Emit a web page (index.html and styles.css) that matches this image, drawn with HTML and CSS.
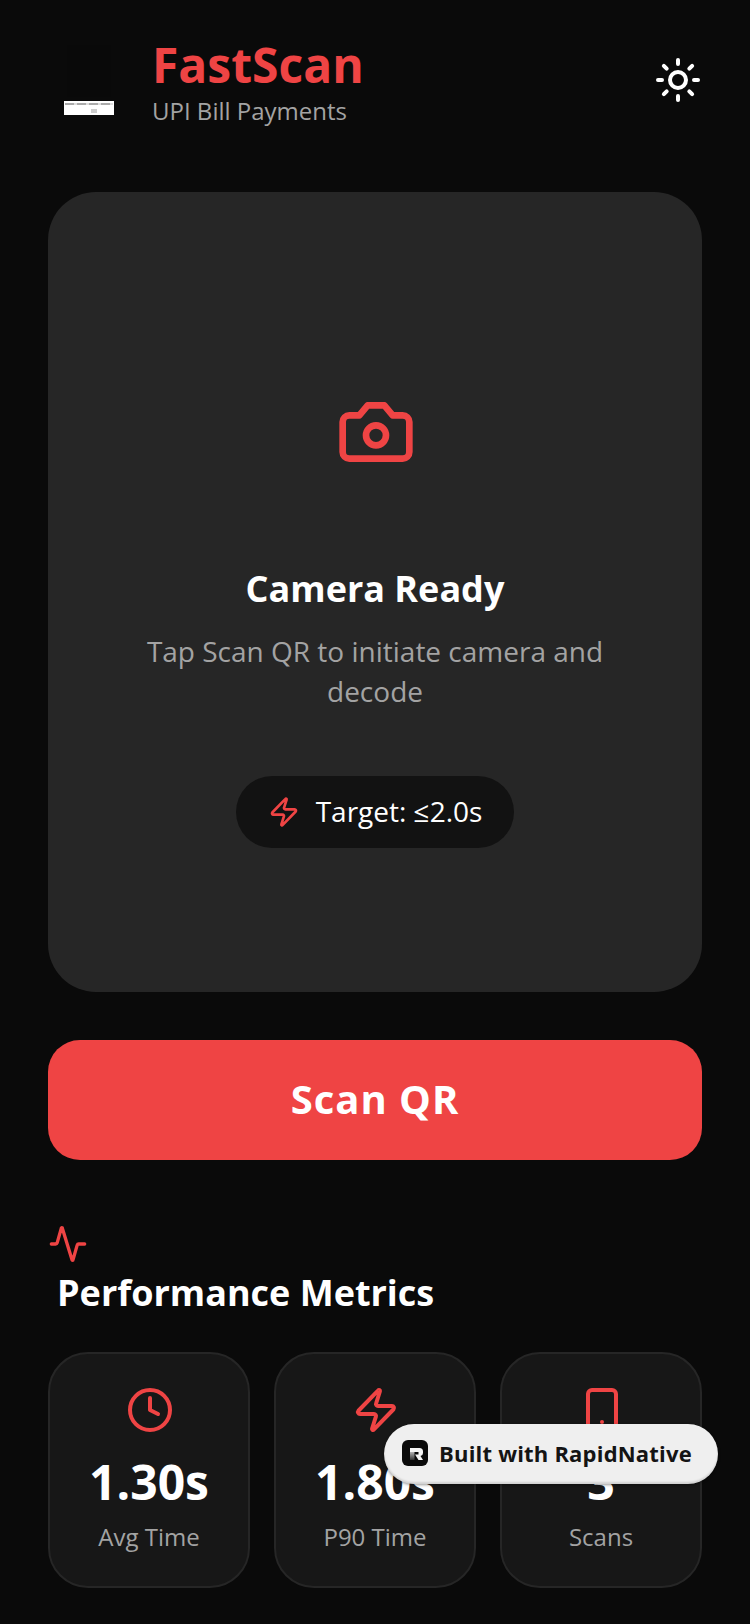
FILE: index.html
```html
<!DOCTYPE html>
<html lang="en">
<head>
  <meta charset="utf-8">
  <title>FastScan</title>
  <link rel="stylesheet" href="styles.css">
</head>
<body>
<div class="screen">

  <header class="top">
    <div class="brand">
      <div class="logo">
        <span class="logo__mark"></span>
        <span class="logo__strip"><span class="logo__print"></span><span class="logo__dot"></span></span>
      </div>
      <div>
        <h1 class="brand__name">FastScan</h1>
        <p class="brand__sub">UPI Bill Payments</p>
      </div>
    </div>
    <svg class="theme" viewBox="0 0 24 24" fill="none" stroke="#fff" stroke-width="2" stroke-linecap="round" stroke-linejoin="round">
      <circle cx="12" cy="12" r="4"/>
      <path d="M12 2v2M12 20v2M4.930 4.930l1.410 1.410M17.660 17.660l1.410 1.410M2 12h2M20 12h2M6.340 17.660l-1.410 1.410M19.070 4.930l-1.410 1.410"/>
    </svg>
  </header>

  <section class="camera">
    <svg class="camera__icon" viewBox="0 0 24 24" fill="none" stroke="#ef4444" stroke-width="2" stroke-linecap="round" stroke-linejoin="round">
      <path d="M14.500 4h-5L7 7H4a2 2 0 0 0-2 2v9a2 2 0 0 0 2 2h16a2 2 0 0 0 2-2V9a2 2 0 0 0-2-2h-3l-2.500-3z"/>
      <circle cx="12" cy="13" r="3"/>
    </svg>
    <h2 class="camera__title">Camera Ready</h2>
    <p class="camera__text">Tap Scan QR to initiate camera and decode</p>
    <div class="target">
      <svg class="target__icon" viewBox="0 0 24 24" fill="none" stroke="#ef4444" stroke-width="2" stroke-linecap="round" stroke-linejoin="round">
        <path d="M4 14a1 1 0 0 1-.78-1.630l9.900-10.200a.5.5 0 0 1 .86.46l-1.920 6.020A1 1 0 0 0 13 10h7a1 1 0 0 1 .78 1.630l-9.900 10.200a.5.5 0 0 1-.86-.46l1.920-6.020A1 1 0 0 0 11 14z"/>
      </svg>
      <span>Target: ≤2.0s</span>
    </div>
  </section>

  <button class="scan">Scan QR</button>

  <svg class="pulse" viewBox="0 0 24 24" fill="none" stroke="#ef4444" stroke-width="2" stroke-linecap="round" stroke-linejoin="round">
    <path d="M2 12h2.500a1 1 0 0 0 1-.7L8 2.500a.3.3 0 0 1 .6 0l5.800 19a.3.3 0 0 0 .6 0l2.500-8.800a1 1 0 0 1 1-.7H22"/>
  </svg>
  <h2 class="metrics-title">Performance Metrics</h2>

  <div class="metrics">
    <div class="metric">
      <svg class="metric__icon" viewBox="0 0 24 24" fill="none" stroke="#ef4444" stroke-width="2" stroke-linecap="round" stroke-linejoin="round">
        <circle cx="12" cy="12" r="10"/>
        <path d="M12 6v6l4 2"/>
      </svg>
      <div class="metric__value">1.30s</div>
      <div class="metric__label">Avg Time</div>
    </div>
    <div class="metric">
      <svg class="metric__icon" viewBox="0 0 24 24" fill="none" stroke="#ef4444" stroke-width="2" stroke-linecap="round" stroke-linejoin="round">
        <path d="M4 14a1 1 0 0 1-.78-1.630l9.900-10.200a.5.5 0 0 1 .86.46l-1.920 6.020A1 1 0 0 0 13 10h7a1 1 0 0 1 .78 1.630l-9.900 10.200a.5.5 0 0 1-.86-.46l1.920-6.020A1 1 0 0 0 11 14z"/>
      </svg>
      <div class="metric__value">1.80s</div>
      <div class="metric__label">P90 Time</div>
    </div>
    <div class="metric">
      <svg class="metric__icon" viewBox="0 0 24 24" fill="none" stroke="#ef4444" stroke-width="2" stroke-linecap="round" stroke-linejoin="round">
        <rect x="5" y="2" width="14" height="20" rx="2"/>
        <path d="M12 18h.01"/>
      </svg>
      <div class="metric__value">3</div>
      <div class="metric__label">Scans</div>
    </div>
  </div>

  <div class="built">
    <svg class="built__logo" viewBox="0 0 26 26">
      <defs>
        <linearGradient id="stem" x1="0" y1="0" x2="0" y2="1">
          <stop offset="0" stop-color="#f5f5f5"/>
          <stop offset="1" stop-color="#333"/>
        </linearGradient>
      </defs>
      <rect width="26" height="26" rx="6" fill="#0a0a0a"/>
      <rect x="8" y="8" width="4.500" height="12" fill="url(#stem)"/>
      <path d="M8 8h9.500a3.500 3.500 0 0 1 3.500 3.500v1.500a3 3 0 0 1-2.500 3l2.500 4h-4.500l-3.500-5.500h3.500v-2.500H8z" fill="#f5f5f5"/>
    </svg>
    <span>Built with RapidNative</span>
  </div>

</div>
</body>
</html>
```

FILE: styles.css
```css
* {
  box-sizing: border-box;
}

body {
  margin: 0;
  background-color: #0a0a0a;
  font-family: 'Open Sans', sans-serif;
  color: #fff;
}

h1, h2, p {
  margin: 0;
}

.screen {
  position: relative;
  width: 750px;
  height: 1624px;
  overflow: hidden;
  padding: 32px 48px 0;
}

.top {
  display: flex;
  justify-content: space-between;
  align-items: center;
  height: 96px;
  margin-bottom: 64px;
}

.brand {
  display: flex;
  align-items: center;
}

.logo {
  display: flex;
  flex-direction: column;
  justify-content: flex-end;
  width: 80px;
  height: 80px;
  padding: 0 14px 5px 16px;
  margin-right: 24px;
}

.logo__mark {
  display: block;
  width: 44px;
  height: 52px;
  margin: 0 0 4px 3px;
  background: #090909;
}

.logo__strip {
  display: block;
  flex: none;
  width: 50px;
  height: 14px;
  background: #fff;
}

.logo__print {
  display: block;
  height: 2px;
  margin: 2px 1px 0;
  background: repeating-linear-gradient(90deg, #aaa 0 9px, #ddd 9px 12px);
}

.logo__dot {
  display: block;
  width: 6px;
  height: 4px;
  margin: 4px 0 0 27px;
  background: #ccc;
}

.brand__name {
  font-size: 48px;
  font-weight: 700;
  line-height: 60px;
  margin-top: 2px;
  color: #ef4444;
}

.brand__sub {
  font-size: 24px;
  line-height: 32px;
  color: #a3a3a3;
}

.theme {
  width: 48px;
  height: 48px;
}

.camera {
  display: flex;
  flex-direction: column;
  align-items: center;
  height: 800px;
  padding: 200px 48px 0;
  background: #262626;
  border-radius: 48px;
}

.camera__icon {
  width: 80px;
  height: 80px;
  margin: 0 0 93px 2px;
}

.camera__title {
  font-size: 36px;
  font-weight: 700;
  line-height: 48px;
  margin-bottom: 18px;
}

.camera__text {
  font-size: 28px;
  line-height: 40px;
  color: #a3a3a3;
  text-align: center;
  margin-bottom: 65px;
}

.target {
  display: flex;
  align-items: center;
  gap: 16px;
  height: 72px;
  padding: 0 32px 2px;
  border-radius: 36px;
  background: #121212;
  font-size: 28px;
}

.target__icon {
  width: 32px;
  height: 32px;
  margin-top: 2px;
}

.scan {
  display: block;
  width: 100%;
  height: 120px;
  margin-top: 48px;
  padding-bottom: 4px;
  border: 0;
  border-radius: 32px;
  background: #ef4444;
  color: #fff;
  font-family: inherit;
  font-size: 40px;
  font-weight: 700;
  letter-spacing: 1px;
}

.pulse {
  display: block;
  width: 40px;
  height: 40px;
  margin-top: 64px;
}

.metrics-title {
  font-size: 36px;
  font-weight: 700;
  line-height: 48px;
  margin: 5px 0 35px 9px;
}

.metrics {
  display: grid;
  grid-template-columns: repeat(3, 1fr);
  gap: 24px;
}

.metric {
  display: flex;
  flex-direction: column;
  align-items: center;
  height: 236px;
  padding-top: 32px;
  background: #171717;
  border: 2px solid #262626;
  border-radius: 40px;
}

.metric__icon {
  width: 48px;
  height: 48px;
  margin-left: 2px;
}

.metric__value {
  font-size: 48px;
  font-weight: 700;
  line-height: 64px;
  margin-top: 16px;
}

.metric__label {
  font-size: 24px;
  line-height: 32px;
  color: #a3a3a3;
  margin-top: 7px;
}

.built {
  position: absolute;
  left: 384px;
  top: 1424px;
  display: flex;
  align-items: center;
  gap: 11px;
  width: 334px;
  height: 60px;
  padding: 0 0 2px 18px;
  border-radius: 30px;
  background: #efefef;
  box-shadow: inset 0 -2px 2px rgba(0, 0, 0, 0.12), 0 1px 3px rgba(0, 0, 0, 0.4);
  color: #141414;
  font-size: 22px;
  font-weight: 700;
  letter-spacing: 0.2px;
}

.built__logo {
  width: 26px;
  height: 26px;
}
```
